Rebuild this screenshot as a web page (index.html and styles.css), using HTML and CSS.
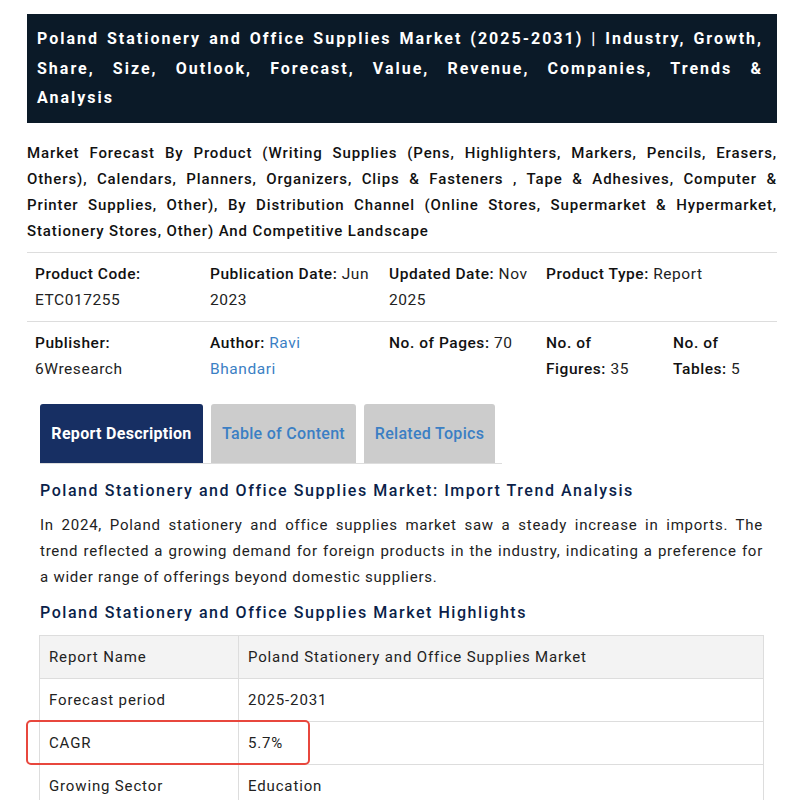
FILE: index.html
```html
<!DOCTYPE html>
<html>
<head>
<meta charset="utf-8">
<link rel="stylesheet" href="styles.css">
</head>
<body>
<div class="page">
  <div class="title-box">
    <h1><span class="ln">Poland Stationery and Office Supplies Market (2025-2031) | Industry, Growth,</span> <span class="ln">Share, Size, Outlook, Forecast, Value, Revenue, Companies, Trends &amp;</span> <span class="last">Analysis</span></h1>
  </div>
  <p class="subtitle"><span class="ln">Market Forecast By Product (Writing Supplies (Pens, Highlighters, Markers, Pencils, Erasers,</span> <span class="ln">Others), Calendars, Planners, Organizers, Clips &amp; Fasteners , Tape &amp; Adhesives, Computer &amp;</span> <span class="ln">Printer Supplies, Other), By Distribution Channel (Online Stores, Supermarket &amp; Hypermarket,</span> <span class="last">Stationery Stores, Other) And Competitive Landscape</span></p>
  <div class="meta meta-1">
    <div class="cell"><b>Product Code:</b> ETC017255</div>
    <div class="cell"><b>Publication Date:</b> Jun 2023</div>
    <div class="cell"><b>Updated Date:</b> Nov 2025</div>
    <div class="cell"><b>Product Type:</b> Report</div>
  </div>
  <div class="meta meta-2">
    <div class="cell"><b>Publisher:</b> 6Wresearch</div>
    <div class="cell wide-pad"><b>Author:</b> <a class="link">Ravi Bhandari</a></div>
    <div class="cell"><b>No. of Pages:</b> 70</div>
    <div class="cell wide-pad"><b>No. of Figures:</b> 35</div>
    <div class="cell"><b>No. of Tables:</b> 5</div>
  </div>
  <div class="content">
    <div class="tabs">
      <div class="tab active t1">Report Description</div>
      <div class="tab t2">Table of Content</div>
      <div class="tab t3">Related Topics</div>
    </div>
    <h2 class="h-first">Poland Stationery and Office Supplies Market: Import Trend Analysis</h2>
    <p class="para"><span class="ln">In 2024, Poland stationery and office supplies market saw a steady increase in imports. The</span> <span class="ln">trend reflected a growing demand for foreign products in the industry, indicating a preference for</span> <span class="last">a wider range of offerings beyond domestic suppliers.</span></p>
    <h2 class="h-second">Poland Stationery and Office Supplies Market Highlights</h2>
    <div class="table-wrap">
      <table class="hl">
        <tr class="head"><td class="c1">Report Name</td><td>Poland Stationery and Office Supplies Market</td></tr>
        <tr><td class="c1">Forecast period</td><td>2025-2031</td></tr>
        <tr><td class="c1">CAGR</td><td>5.7%</td></tr>
        <tr><td class="c1">Growing Sector</td><td>Education</td></tr>
      </table>
      <div class="highlight"></div>
    </div>
  </div>
</div>
</body>
</html>
```
FILE: styles.css
```css
html, body { margin: 0; padding: 0; background: #fff; }
body { font-family: Roboto, "Noto Sans", sans-serif; color: #1a1a1a; overflow: hidden; height: 800px; }
.page { width: 750px; margin: 14px 0 0 27px; }
.ln { display: block; text-align: justify; text-align-last: justify; white-space: nowrap; }
.last { display: block; }
.title-box { background: #0b1a28; padding: 10px 14px 10px 10px; }
h1 { margin: 0; color: #fff; font-size: 16px; font-weight: 700; line-height: 29.5px; letter-spacing: 2px; }
.subtitle { margin: 17px 0 0 0; font-size: 15px; font-weight: 500; line-height: 26px; color: #111; letter-spacing: 0.88px; padding-bottom: 8px; border-bottom: 1px solid #ddd; }
.meta { display: grid; border-bottom: 1px solid #ddd; font-size: 15.5px; line-height: 26px; color: #222; letter-spacing: 0.55px; }
.meta b { font-weight: 500; color: #111; }
.meta-1 { grid-template-columns: 175px 179px 157px 1fr; padding: 8px 0 8px 8px; }
.meta-2 { grid-template-columns: 175px 179px 157px 127px 1fr; border-bottom: none; padding: 8px 0 9px 8px; }
.cell { padding-right: 10px; }
.cell.wide-pad { padding-right: 22px; }
.link { color: #3b7fc4; text-decoration: none; }
.content { padding: 13px 14px 0 13px; }
.tabs { display: flex; gap: 8px; border-bottom: 1px solid #ddd; width: 462px; }
.tab { height: 59px; display: flex; align-items: center; justify-content: center; background: #cccccc; color: #3b7fc4; font-size: 16px; font-weight: 500; letter-spacing: 0.3px; border-radius: 3px 3px 0 0; }
.tab.active { background: #172f63; color: #fff; font-weight: 700; }
.t1 { width: 163px; }
.t2 { width: 145px; }
.t3 { width: 131px; }
h2 { margin: 0; font-size: 16px; font-weight: 500; color: #0b1f4a; letter-spacing: 1.55px; line-height: 26px; }
.h-first { margin-top: 14px; }
.h-second { margin-top: 10px; }
.para { margin: 8px 0 0 0; font-size: 15px; line-height: 26px; color: #222; letter-spacing: 0.75px; }
.table-wrap { position: relative; margin: 9px 0 0 -1px; }
.hl { width: 725px; border-collapse: collapse; font-size: 15px; color: #222; letter-spacing: 0.85px; }
.hl td { border: 1px solid #ddd; height: 42px; padding: 0 9px; }
.hl .c1 { width: 180px; }
.hl .head td { background: #f3f3f3; }
.highlight { position: absolute; left: -13px; top: 85px; width: 280px; height: 41px; border: 2px solid #e8473d; border-radius: 5px; }
```
